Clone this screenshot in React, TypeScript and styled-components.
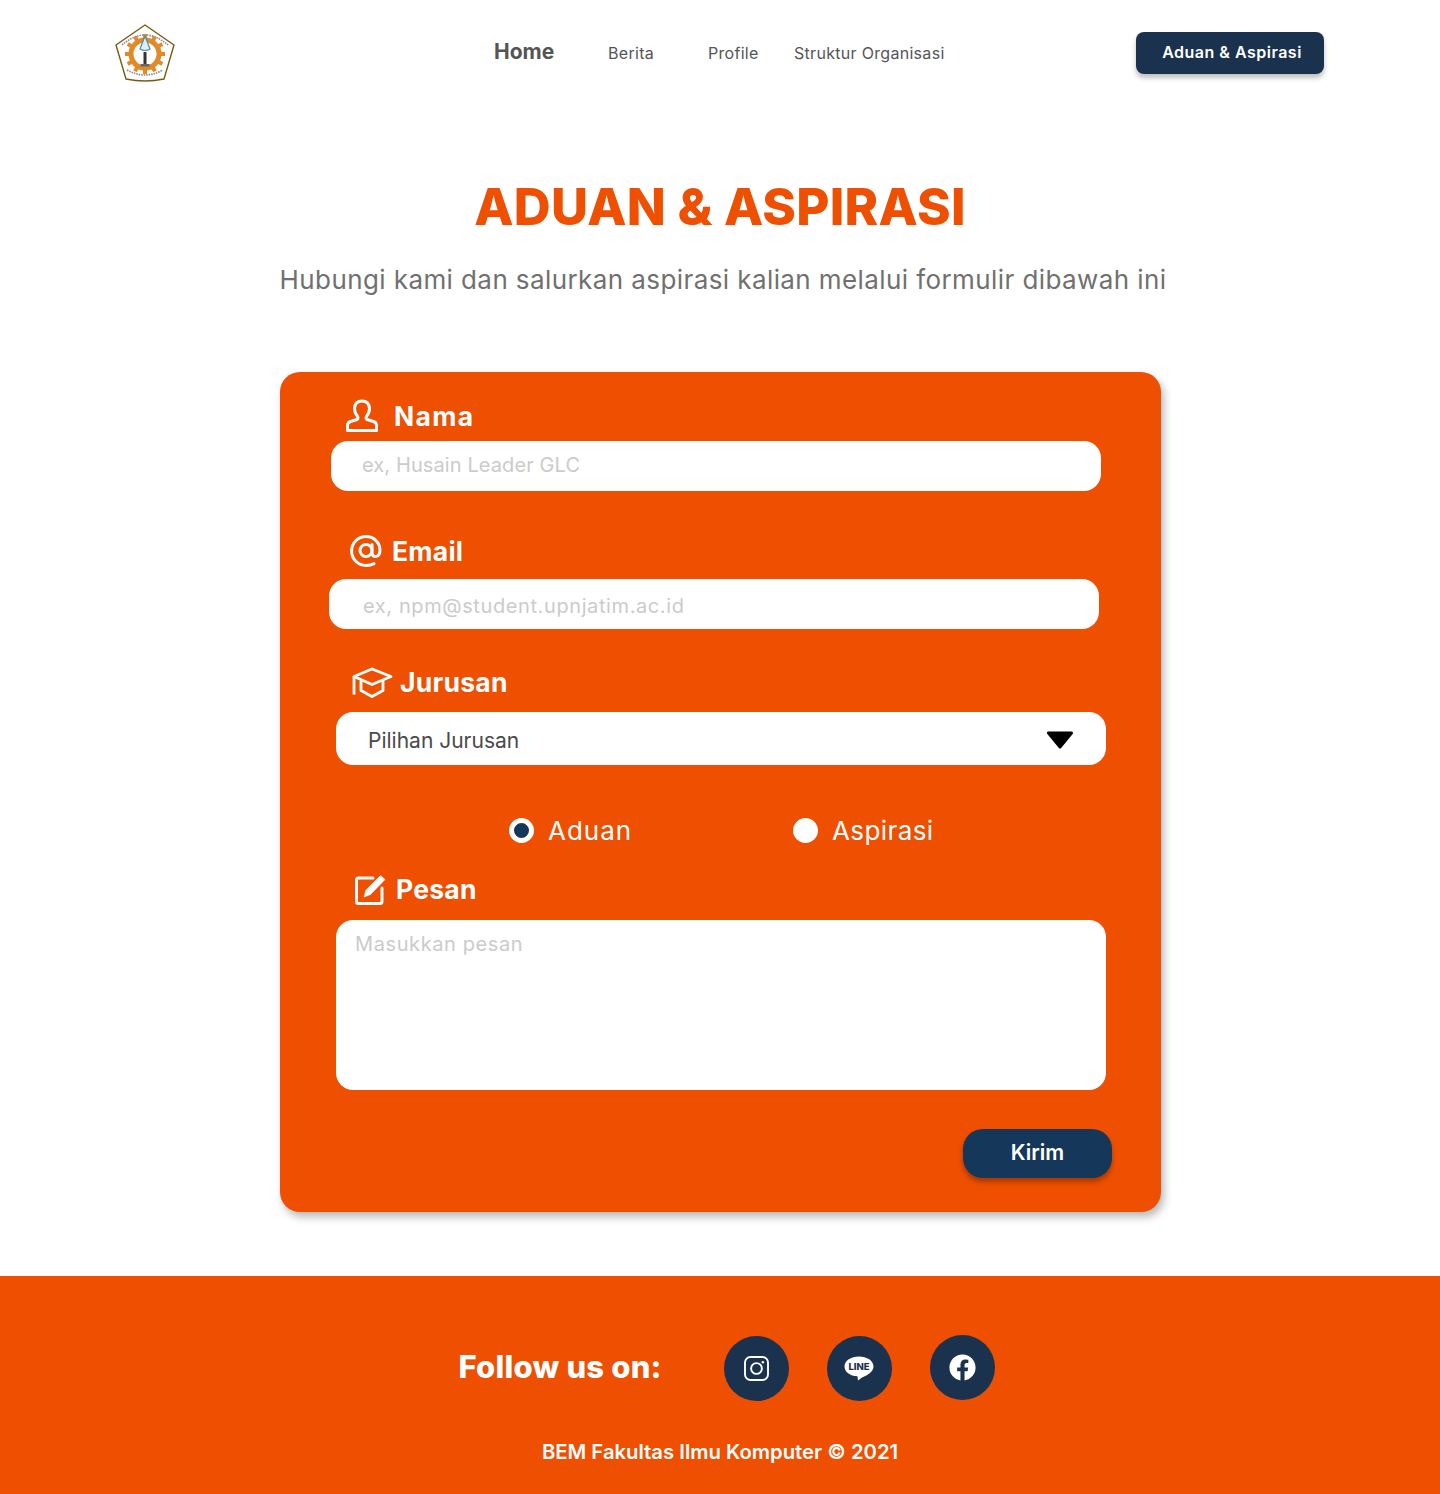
import React from "react";
import styled, { createGlobalStyle } from "styled-components";
import { FaFacebook } from "react-icons/fa";

const FONT = `Inter, "Open Sans", "Liberation Sans", sans-serif`;
const ORANGE = "#ef4f00";
const NAVY = "#1a324d";

const Global = createGlobalStyle`
  html, body { margin: 0; padding: 0; background: #fff; }
  body { font-family: ${FONT}; }
  input, select, textarea, button { font-family: ${FONT}; }
`;

const Page = styled.div`
  width: 1440px;
  min-height: 1494px;
  display: flex;
  flex-direction: column;
`;

const Nav = styled.nav`
  height: 106px;
  display: flex;
  align-items: flex-start;
  padding: 23px 116px 0 114px;
  box-sizing: border-box;
`;
const Logo = styled.svg`
  width: 62px;
  height: 60px;
  flex: none;
`;
const NavLinks = styled.div`
  display: flex;
  align-items: center;
  height: 60px;
  margin-left: 318px;
  flex: 1;
`;
const NavLink = styled.a<{ $w: number; $active?: boolean }>`
  width: ${(p) => p.$w}px;
  flex: none;
  font-size: ${(p) => (p.$active ? 21 : 16)}px;
  font-weight: ${(p) => (p.$active ? 700 : 400)};
  letter-spacing: ${(p) => (p.$active ? 0 : 0.3)}px;
  margin-top: ${(p) => (p.$active ? -3 : 0)}px;
  color: #555555;
  white-space: nowrap;
`;
const NavButton = styled.button`
  width: 188px;
  height: 42px;
  margin-top: 9px;
  flex: none;
  border: none;
  border-radius: 8px;
  background: ${NAVY};
  color: #fff;
  font-size: 16px;
  font-weight: 600;
  letter-spacing: 0.5px;
  padding: 0 0 2px 4px;
  box-shadow: 0 4px 5px rgba(0, 0, 0, 0.25);
`;

const Heading = styled.h1`
  margin: 41px 0 0;
  text-align: center;
  font-size: 51px;
  line-height: 120px;
  height: 120px;
  font-weight: 800;
  letter-spacing: 0.25px;
  color: ${ORANGE};
`;
const Sub = styled.p`
  margin: -7px 0 0 6px;
  text-align: center;
  font-size: 26px;
  line-height: 40px;
  color: #707070;
  letter-spacing: 0.41px;
`;

const Card = styled.form`
  width: 881px;
  height: 840px;
  margin: 72px 0 0 280px;
  padding-top: 26px;
  box-sizing: border-box;
  background: ${ORANGE};
  border-radius: 20px;
  box-shadow: 3px 5px 9px rgba(0, 0, 0, 0.28);
  display: flex;
  flex-direction: column;
`;
const Label = styled.label<{ $left: number; $gap: number; $top?: number; $track?: number }>`
  display: flex;
  align-items: center;
  gap: ${(p) => p.$gap}px;
  height: 36px;
  margin: ${(p) => p.$top ?? 0}px 0 0 ${(p) => p.$left}px;
  color: #fff;
  font-size: 26.5px;
  font-weight: 700;
  letter-spacing: ${(p) => p.$track ?? 0.25}px;
`;
const TextInput = styled.input<{ $left: number; $pad: number; $top?: number; $track: number; $drop: number; $lift: number }>`
  display: block;
  width: 770px;
  height: 50px;
  margin: ${(p) => p.$top ?? 0}px 0 0 ${(p) => p.$left}px;
  padding: ${(p) => p.$drop}px 0 ${(p) => p.$lift}px ${(p) => p.$pad}px;
  box-sizing: border-box;
  border: none;
  outline: none;
  border-radius: 17px;
  background: #fff;
  font-size: 20px;
  letter-spacing: ${(p) => p.$track}px;
  &::placeholder { color: #cbcbcb; opacity: 1; }
`;
const SelectBox = styled.div`
  width: 770px;
  height: 53px;
  margin: 12px 0 0 56px;
  padding: 3px 32px 0;
  box-sizing: border-box;
  border-radius: 17px;
  background: #fff;
  color: #4a4a4a;
  font-size: 21px;
  display: flex;
  align-items: center;
  justify-content: space-between;
`;
const Caret = styled.svg`
  width: 28px;
  height: 18px;
  flex: none;
`;
const RadioRow = styled.div`
  display: flex;
  height: 36px;
  margin: 47px 0 0 229px;
  align-items: center;
`;
const RadioItem = styled.span<{ $w: number; $track: number; $gap: number }>`
  width: ${(p) => p.$w}px;
  display: flex;
  align-items: center;
  gap: ${(p) => p.$gap}px;
  color: #fff;
  font-size: 26px;
  letter-spacing: ${(p) => p.$track}px;
`;
const RadioDot = styled.span<{ $on?: boolean }>`
  width: 25px;
  height: 25px;
  box-sizing: border-box;
  border-radius: 50%;
  background: ${(p) => (p.$on ? "#14375a" : "#fff")};
  border: ${(p) => (p.$on ? "5px solid #fff" : "none")};
`;
const MessageBox = styled.textarea`
  display: block;
  width: 770px;
  height: 170px;
  margin: 13px 0 0 56px;
  padding: 10px 19px;
  box-sizing: border-box;
  border: none;
  outline: none;
  resize: none;
  border-radius: 17px;
  background: #fff;
  font-size: 20px;
  line-height: 28px;
  letter-spacing: 0.6px;
  &::placeholder { color: #cbcbcb; opacity: 1; }
`;
const SendRow = styled.div`
  display: flex;
  justify-content: flex-end;
  padding-right: 49px;
  margin-top: 39px;
`;
const SendButton = styled.button`
  width: 149px;
  height: 49px;
  border: none;
  border-radius: 20px;
  background: #14375a;
  color: #fff;
  font-size: 21px;
  font-weight: 600;
  padding: 0 0 3px;
  box-shadow: 0 4px 5px rgba(0, 0, 0, 0.3);
`;

const Footer = styled.footer`
  margin-top: 64px;
  height: 218px;
  background: ${ORANGE};
  display: flex;
  flex-direction: column;
  align-items: center;
`;
const FollowRow = styled.div`
  display: flex;
  align-items: center;
  height: 66px;
  margin: 59px 0 0 13px;
`;
const FollowText = styled.span`
  width: 265px;
  color: #fff;
  font-size: 31px;
  font-weight: 800;
  letter-spacing: 0.2px;
  white-space: nowrap;
  margin-bottom: 3px;
`;
const Socials = styled.div`
  display: flex;
  gap: 38px;
`;
const Social = styled.a<{ $up?: boolean }>`
  width: 65px;
  height: 65px;
  border-radius: 50%;
  background: ${NAVY};
  display: flex;
  align-items: center;
  justify-content: center;
  color: #fff;
  margin-top: ${(p) => (p.$up ? -1 : 0)}px;
`;
const Copy = styled.p`
  margin: 37px 0 0;
  color: #fff;
  font-size: 20.3px;
  line-height: 28px;
  font-weight: 600;
`;

const LogoMark = () => {
  const teeth = Array.from({ length: 12 }, (_, i) => i * 30);
  return (
    <Logo viewBox="0 0 62 60">
      <path d="M31 2 L60 22 L50 56 Q31 60 12 56 L2 22 Z" fill="#fff" stroke="#7a5a10" strokeWidth="1.4" strokeLinejoin="round" />
      <path d="M8 22 Q31 2 54 22" fill="none" stroke="#888" strokeWidth="1.6" strokeDasharray="1.5 1" />
      <path d="M13 47 Q31 57 49 47" fill="none" stroke="#888" strokeWidth="1.6" strokeDasharray="1.5 1" />
      <g transform="translate(31 31)">
        {teeth.map((a) => (
          <rect key={a} x="-2" y="-20" width="4" height="4" fill="#e08a2a" transform={`rotate(${a})`} />
        ))}
        <circle r="14" fill="none" stroke="#e08a2a" strokeWidth="5" />
      </g>
      <path d="M31 13 L36 26 Q31 29 26 26 Z" fill="#dceef6" stroke="#4c8fae" strokeWidth="1.2" />
      <rect x="29.5" y="29" width="3" height="12" fill="#333" />
      <rect x="26.5" y="41" width="9" height="2.5" fill="#666" />
    </Logo>
  );
};

const UserIcon = () => (
  <svg width="34" height="34" viewBox="0 0 34 34" fill="none" stroke="#fff" strokeWidth="3" strokeLinejoin="round">
    <path d="M2.5 31.5 V26.5 Q2.5 23 7 22 L12 20.5 Q13.5 19.5 12.6 17.5 Q9.5 14 9.5 9.5 Q10 2 17 2 Q24 2 24.5 9.5 Q24.5 14 21.4 17.5 Q20.5 19.5 22 20.5 L27 22 Q31.5 23 31.5 26.5 V31.5 Z" />
  </svg>
);

const AtIcon = () => (
  <svg width="32" height="32" viewBox="0 0 32 32" fill="none" stroke="#fff" strokeWidth="3" strokeLinecap="round">
    <circle cx="16" cy="15.5" r="6" />
    <path d="M22 9.5 V17.5 Q22 21.5 25.5 21.5 Q29.8 21 30 15.5 C30 7 23.5 1.6 16 1.6 C8 1.6 1.6 8 1.6 16 C1.6 24 8 30.4 16 30.4 Q20.5 30.4 24 28.6" />
  </svg>
);

const CapIcon = () => (
  <svg width="41" height="31" viewBox="0 0 41 31" fill="none" stroke="#fff" strokeWidth="2.8" strokeLinejoin="round">
    <path d="M2 9.5 L20 2 L39 9.5 L20 17.5 Z" />
    <path d="M2 9.5 V27.5" />
    <path d="M9 14 V23.5 L20 29.5 L31 23.5 V14" />
  </svg>
);

const EditIcon = () => (
  <svg width="31" height="31" viewBox="0 0 31 31" fill="none" stroke="#fff">
    <path d="M18 4 H3.5 Q1.5 4 1.5 6 V27.5 Q1.5 29.5 3.5 29.5 H25 Q27 29.5 27 27.5 V14" strokeWidth="3" strokeLinecap="round" />
    <path d="M25.5 1.5 L30 5.5 L15.5 20.5 L9 23 L11 16 Z" fill="#fff" strokeWidth="0.6" strokeLinejoin="round" />
  </svg>
);

const InstagramIcon = () => (
  <svg width="25" height="25" viewBox="0 0 25 25" fill="none" stroke="#fff" strokeWidth="1.9">
    <rect x="1" y="1" width="23" height="23" rx="5.5" />
    <circle cx="12.5" cy="12.5" r="5.4" />
    <circle cx="18.8" cy="6.2" r="1.3" fill="#fff" stroke="none" />
  </svg>
);

const LineIcon = () => (
  <svg width="30" height="25" viewBox="0 0 30 25">
    <path d="M15 0.5 C23 0.5 29.5 4.8 29.5 10.5 C29.5 15.5 24 19 18 21.5 L14 24.5 L13.5 20.3 C6 20 0.5 16 0.5 10.5 C0.5 4.8 7 0.5 15 0.5 Z" fill="#fff" />
    <text x="15" y="14" textAnchor="middle" fontFamily={FONT} fontSize="9.5" fontWeight="800" fill={NAVY}>LINE</text>
  </svg>
);

export default function App() {
  return (
    <Page>
      <Global />
      <Nav>
        <LogoMark />
        <NavLinks>
          <NavLink $w={114} $active>Home</NavLink>
          <NavLink $w={100}>Berita</NavLink>
          <NavLink $w={86}>Profile</NavLink>
          <NavLink $w={160}>Struktur Organisasi</NavLink>
        </NavLinks>
        <NavButton type="button">Aduan &amp; Aspirasi</NavButton>
      </Nav>

      <Heading>ADUAN &amp; ASPIRASI</Heading>
      <Sub>Hubungi kami dan salurkan aspirasi kalian melalui formulir dibawah ini</Sub>

      <Card>
        <Label $left={65} $gap={15} $track={1.3}><UserIcon />Nama</Label>
        <TextInput $left={51} $pad={31} $top={7} $track={0.1} $drop={0} $lift={2} placeholder="ex, Husain Leader GLC" />

        <Label $left={70} $gap={10} $top={42}><AtIcon />Email</Label>
        <TextInput $left={49} $pad={34} $top={10} $track={0.6} $drop={3} $lift={0} placeholder="ex, npm@student.upnjatim.ac.id" />

        <Label $left={72} $gap={7} $top={35}><CapIcon />Jurusan</Label>
        <SelectBox>
          Pilihan Jurusan
          <Caret viewBox="0 0 28 18"><path d="M2.5 2 H25.5 L14 16 Z" fill="#000" stroke="#000" strokeWidth="3" strokeLinejoin="round" /></Caret>
        </SelectBox>

        <RadioRow>
          <RadioItem $w={284} $track={1} $gap={14}><RadioDot $on />Aduan</RadioItem>
          <RadioItem $w={180} $track={0.4} $gap={14}><RadioDot />Aspirasi</RadioItem>
        </RadioRow>

        <Label $left={75} $gap={10} $top={23}><EditIcon />Pesan</Label>
        <MessageBox placeholder="Masukkan pesan" />

        <SendRow><SendButton type="button">Kirim</SendButton></SendRow>
      </Card>

      <Footer>
        <FollowRow>
          <FollowText>Follow us on:</FollowText>
          <Socials>
            <Social><InstagramIcon /></Social>
            <Social><LineIcon /></Social>
            <Social $up><FaFacebook size={27} /></Social>
          </Socials>
        </FollowRow>
        <Copy>BEM Fakultas Ilmu Komputer © 2021</Copy>
      </Footer>
    </Page>
  );
}
